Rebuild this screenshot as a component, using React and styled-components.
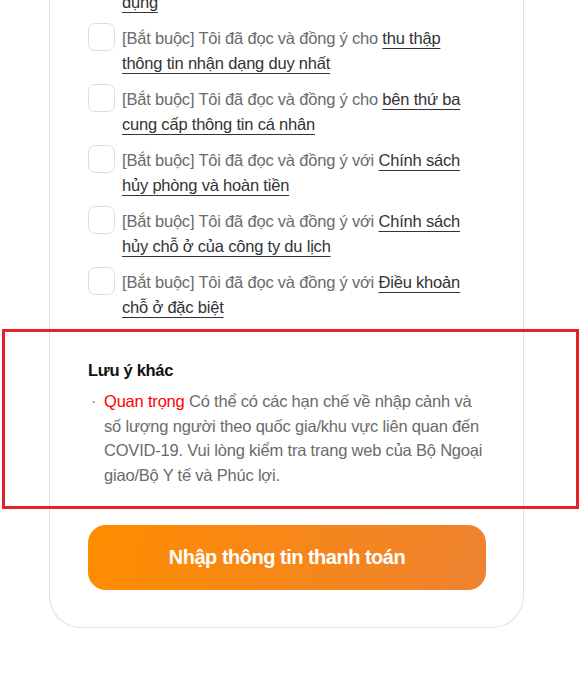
import React from "react";
import styled, { createGlobalStyle } from "styled-components";

const Global = createGlobalStyle`
  html, body { margin: 0; padding: 0; background: #fff; }
  body { font-family: "Liberation Sans", Arial, sans-serif; overflow: hidden; }
  * { box-sizing: border-box; }
`;

const Page = styled.div`
  width: 581px;
  height: 684px;
  overflow: hidden;
`;

const Card = styled.div`
  margin-top: -35px;
  margin-left: 49px;
  width: 475px;
  border: 1px solid #e0e0e0;
  border-top: none;
  border-radius: 0 0 32px 32px;
  padding: 0 37px 37px 38px;
  background: #fff;
`;

const AgreeList = styled.ul`
  list-style: none;
  margin: 0;
  padding: 0;
  display: flex;
  flex-direction: column;
  gap: 12px;
`;

const AgreeItem = styled.li`
  display: flex;
  align-items: flex-start;
  gap: 7px;
`;

const Check = styled.span`
  flex: none;
  width: 27px;
  height: 28px;
  margin-top: -3px;
  border: 1px solid #dedede;
  border-radius: 7px;
  background: #fff;
`;

const AgreeText = styled.p`
  margin: 0;
  max-width: 361px;
  font-size: 16.5px;
  line-height: 24.5px;
  letter-spacing: -0.2px;
  color: #6b6b6b;
`;

const Link = styled.a`
  color: #333;
  text-decoration: underline;
  text-underline-offset: 4px;
  text-decoration-thickness: 1px;
`;

const Notes = styled.section`
  position: relative;
  margin-top: 10px;
  padding: 29px 0 21px;

  &::before {
    content: "";
    position: absolute;
    left: -86px;
    right: -93px;
    top: 0;
    bottom: 0;
    border: 3px solid #e4222a;
    pointer-events: none;
  }
`;

const NotesTitle = styled.h3`
  margin: 0 0 7px;
  font-size: 16.5px;
  line-height: 24px;
  font-weight: 700;
  letter-spacing: -0.3px;
  color: #111;
`;

const NoteList = styled.ul`
  list-style: none;
  margin: 0;
  padding: 0;
`;

const NoteItem = styled.li`
  position: relative;
  padding-left: 16px;
  font-size: 16.5px;
  line-height: 24.7px;
  letter-spacing: -0.2px;
  color: #6b6b6b;

  &::before {
    content: "·";
    position: absolute;
    left: 3px;
    top: 0;
    color: #888;
  }
`;

const Important = styled.span`
  color: #ff0000;
`;

const PayButton = styled.button`
  display: block;
  width: 398px;
  height: 65px;
  margin-top: 16px;
  border: none;
  border-radius: 18px;
  background: linear-gradient(100deg, #ff8c00 0%, #ee8230 100%);
  color: #fff;
  font-family: "Liberation Sans", Arial, sans-serif;
  font-size: 20px;
  font-weight: 700;
  letter-spacing: -0.5px;
  cursor: pointer;
`;

const items = [
  { pre: "[Bắt buộc] Tôi đã đọc và đồng ý với ", link: "Điều kiện sử dụng" },
  { pre: "[Bắt buộc] Tôi đã đọc và đồng ý cho ", link: "thu thập thông tin nhận dạng duy nhất" },
  { pre: "[Bắt buộc] Tôi đã đọc và đồng ý cho ", link: "bên thứ ba cung cấp thông tin cá nhân" },
  { pre: "[Bắt buộc] Tôi đã đọc và đồng ý với ", link: "Chính sách hủy phòng và hoàn tiền" },
  { pre: "[Bắt buộc] Tôi đã đọc và đồng ý với ", link: "Chính sách hủy chỗ ở của công ty du lịch" },
  { pre: "[Bắt buộc] Tôi đã đọc và đồng ý với ", link: "Điều khoản chỗ ở đặc biệt" },
];

export default function App() {
  return (
    <Page>
      <Global />
      <Card>
        <AgreeList>
          {items.map((it, i) => (
            <AgreeItem key={i}>
              <Check />
              <AgreeText>
                {it.pre}
                <Link>{it.link}</Link>
              </AgreeText>
            </AgreeItem>
          ))}
        </AgreeList>
        <Notes>
          <NotesTitle>Lưu ý khác</NotesTitle>
          <NoteList>
            <NoteItem>
              <Important>Quan trọng</Important> Có thể có các hạn chế về nhập cảnh và số lượng người theo quốc gia/khu vực liên quan đến COVID-19. Vui lòng kiểm tra trang web của Bộ Ngoại giao/Bộ Y tế và Phúc lợi.
            </NoteItem>
          </NoteList>
        </Notes>
        <PayButton>Nhập thông tin thanh toán</PayButton>
      </Card>
    </Page>
  );
}
